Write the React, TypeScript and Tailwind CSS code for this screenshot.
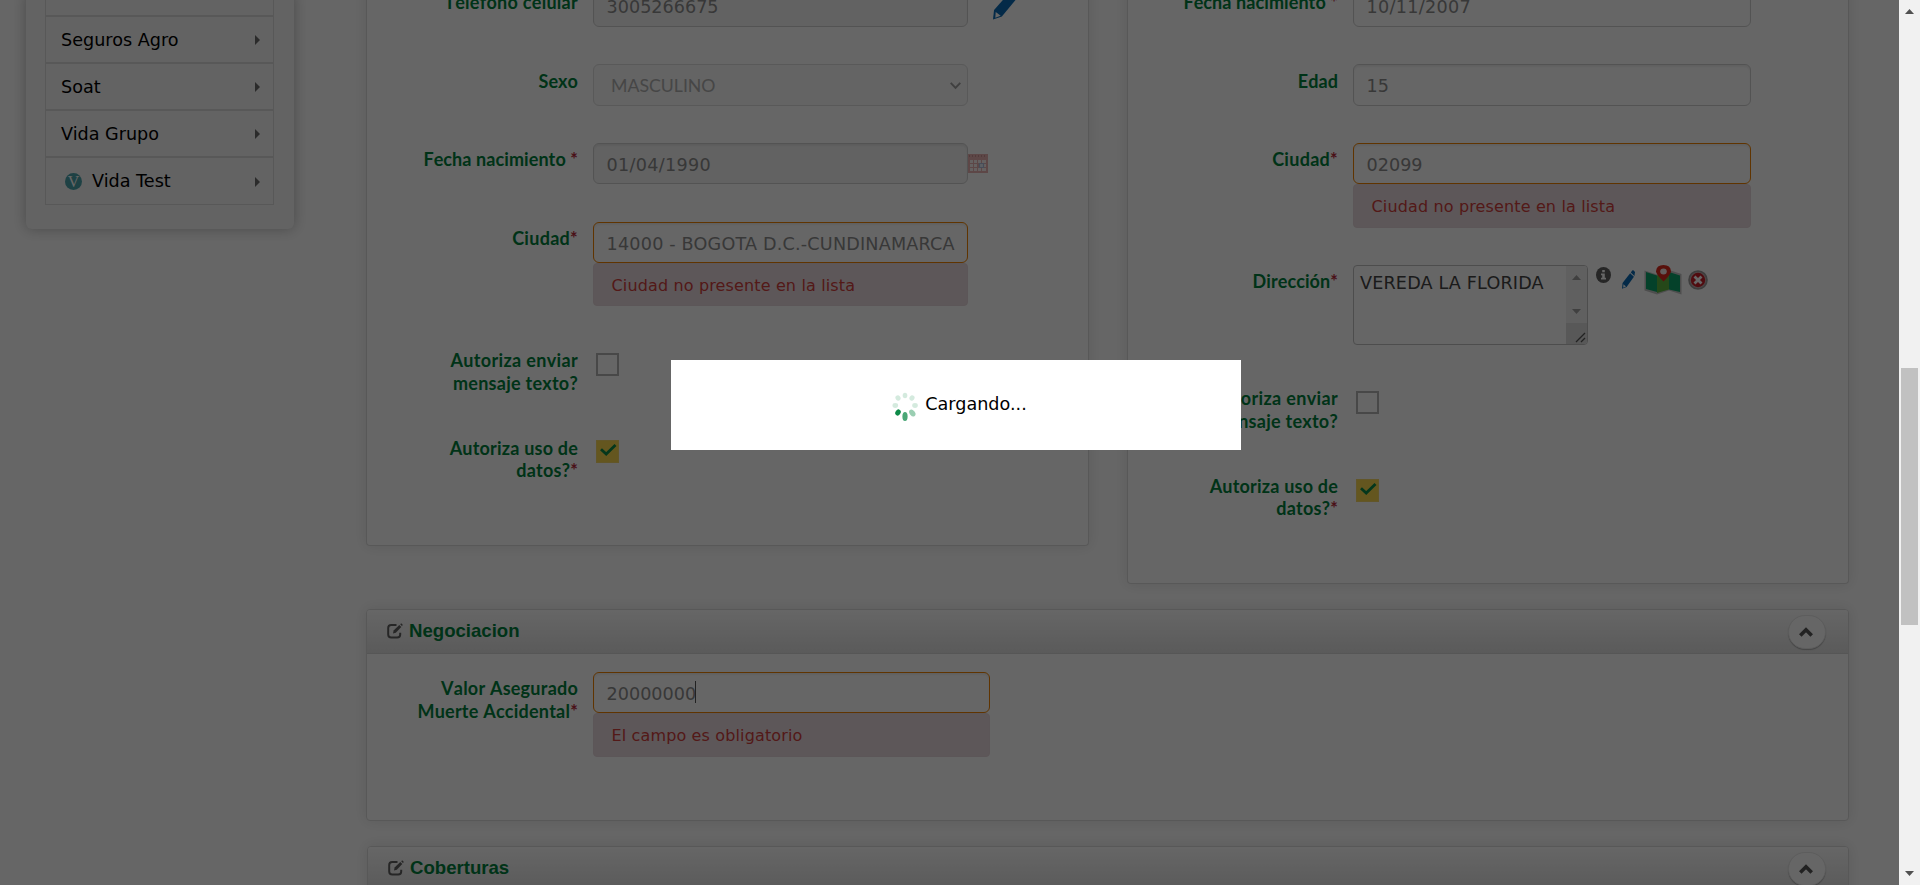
import type { ReactNode } from 'react';

const SANS = "font-['DejaVu_Sans',Verdana,sans-serif]";

function Label({ children, required, pad = 'pt-[5px]', w = 'w-[211px]', leading = 'leading-[23px]', spacing = 'tracking-[0.08px]' }: {
  children: ReactNode; required?: boolean; pad?: string; w?: string; leading?: string; spacing?: string;
}) {
  return (
    <div className={`shrink-0 whitespace-nowrap text-right font-['Lato',sans-serif] text-[18px] font-bold text-[#007f3c] [font-kerning:none] ${w} ${pad} ${leading} ${spacing}`}>
      {children}
      {required && <span className="text-[#b82a3c]">*</span>}
    </div>
  );
}

function Row({ h, children }: { h: string; children: ReactNode }) {
  return <div className={`flex items-start gap-[15px] ${h}`}>{children}</div>;
}

function Field({ value, w, h = 'h-[41px]', pad = 'pt-[3px]', tone = 'bg-white border-[#d0d0d0]', spacing = 'tracking-normal', caret }: {
  value: string; w: string; h?: string; pad?: string; tone?: string; spacing?: string; caret?: boolean;
}) {
  return (
    <div className={`flex items-center overflow-hidden whitespace-nowrap rounded-md border pl-[12.6px] text-[17.6px] text-[#8c8c8c] shadow-[inset_0_2px_2px_rgba(0,0,0,0.06)] ${SANS} ${w} ${h} ${pad} ${tone} ${spacing}`}>
      {value}
      {caret && <span className="-ml-px -mt-1 h-[22px] w-px bg-[#555]" />}
    </div>
  );
}

function ErrorNote({ children, h = 'h-[44px]', pad = 'pt-px' }: { children: ReactNode; h?: string; pad?: string }) {
  return (
    <div className={`flex items-center rounded border border-[#e6d6db] bg-[#e9dade] pl-[17.5px] text-[16px] tracking-[0.14px] text-[#cf3f3c] ${SANS} ${h} ${pad}`}>
      {children}
    </div>
  );
}

function Box({ checked, mt }: { checked?: boolean; mt: string }) {
  return checked ? (
    <div className={`ml-[3px] flex size-[23px] items-center justify-center border border-[#f5d668] bg-[#fbd64e] ${mt}`}>
      <svg className="-mt-0.5 ml-0.5" width="17" height="13" viewBox="0 0 17 13" fill="none" stroke="#0a8a48" strokeWidth="2.8">
        <path d="M1 5.2 6.2 10 15.5 1" />
      </svg>
    </div>
  ) : (
    <div className={`ml-[3px] size-[23px] border-2 border-[#b4b4b4] bg-white ${mt}`} />
  );
}

function Pencil({ w, h }: { w: number; h: number }) {
  return (
    <svg width={w} height={h} viewBox="0 0 24 32" preserveAspectRatio="none">
      <path d="M0 31.5 1 22 15 5.5l7 6L8.500 28.500Z" fill="#0a6ab4" />
      <path d="M16.300 4 18.800 1q1.300-1.300 2.800 0l2 2q1 1.200 0 2.600L23 10Z" fill="#0a6ab4" />
      <path d="m2.600 24 4.800 3.800-5.200 2Z" fill="#fff" />
    </svg>
  );
}

function CalendarIcon() {
  return (
    <svg className="mt-[11px]" width="20" height="19" viewBox="0 0 20 19" opacity="0.6">
      <path d="M0 0h20v19H0z" fill="#d98080" />
      <path d="M1 1h1v2H1zM4 1h1v2H4zM7 1h1v2H7zM10 1h1v2h-1zM13 1h1v2h-1zM16 1h1v2h-1z" fill="#a85050" />
      <path d="M2 6h3v3H2zM6 6h3v3H6zM10 6h3v3h-3zM14 6h4v3h-4zM2 10h3v3H2zM6 10h3v3H6zM16 10h2v3h-2zM2 14h3v3H2zM6 14h3v3H6zM10 14h3v3h-3zM14 14h4v3h-4z" fill="#fbeaea" />
      <path d="M11.500 9.500h4v4h-4z" fill="#dbe6f8" stroke="#7f96c4" strokeWidth="1.200" />
    </svg>
  );
}

function MapIcon() {
  return (
    <svg width="38" height="30" viewBox="0 0 38 30">
      <path d="m.5 5.500 12.500 4L25 5l12.500 4v20.500L25 25.500 13 29.500.5 25.500Z" fill="#c4c4c4" />
      <path d="m2 7 11 3.500V27L2 24Z" fill="#0aa36a" />
      <path d="M13 10.500 25 7v17.500L13 28Z" fill="#5cb440" />
      <path d="m25 7 11 3.500V27l-11-2.500Z" fill="#0aa36a" />
      <path d="M19.500 16.500Q12 9.500 12 6.300 12.500 0 19.500 0T27 6.300Q27 9.500 19.500 16.500Z" fill="#dc2a1c" />
      <ellipse cx="19.500" cy="6.500" rx="3.300" ry="3" fill="#f5e6e4" />
    </svg>
  );
}

function InfoIcon() {
  return (
    <svg width="15" height="16" viewBox="0 0 15 16">
      <ellipse cx="7.500" cy="8" rx="7.500" ry="8" fill="#5f5f5f" />
      <path d="M6.200 3h2.600v2.300H6.200zM5 6.500h3.800v4.300H10v1.700H5v-1.700h1.200V8.200H5z" fill="#fff" />
    </svg>
  );
}

function RemoveIcon() {
  return (
    <svg width="20" height="20" viewBox="0 0 20 20">
      <circle cx="10" cy="10" r="9.800" fill="#9c9c9c" />
      <circle cx="10" cy="10" r="8" fill="#c8b4b4" />
      <circle cx="10" cy="10" r="7.200" fill="#c81e28" />
      <path d="m6.500 6.500 7 7m0-7-7 7" stroke="#fff" strokeWidth="2.800" />
    </svg>
  );
}

function EditIcon() {
  return (
    <svg width="16" height="16" viewBox="0 0 16 16" fill="none">
      <path d="M9.500 1.900H4.200Q1.200 1.900 1.200 4.900V11.500Q1.200 14.500 4.200 14.500H10.200Q13.200 14.500 13.200 11.500V9.800" stroke="#606060" strokeWidth="2" />
      <path d="m6 10.500.6-3L12.300 2l2 2L8.800 9.700Z" fill="#606060" />
      <path d="m13.200 1.200 1-1 1.700 1.700-1 1Z" fill="#606060" />
    </svg>
  );
}

function PanelHead({ title }: { title: string }) {
  return (
    <div className="flex h-11 items-start justify-between border-b border-[#d8d8d8] bg-gradient-to-b from-white to-[#e2e2e2] pl-[20px] pr-[22px]">
      <div className="flex items-center gap-[6px] pt-[9px]">
        <EditIcon />
        <h3 className="font-['Liberation_Sans',Arial,sans-serif] text-[18.6px] font-bold leading-6 text-[#007f3c]">{title}</h3>
      </div>
      <div className="mt-[5px] flex h-[34px] w-[38px] items-center justify-center rounded-full border border-[#e8e8e8] bg-white shadow-[0_1px_1px_rgba(0,0,0,0.25)]">
        <svg className="-ml-0.5" width="14" height="10" viewBox="0 0 14 10" fill="none" stroke="#555" strokeWidth="3.600">
          <path d="M1.300 8.500 7 2.800l5.700 5.700" />
        </svg>
      </div>
    </div>
  );
}

function MenuItem({ label, h = 'h-[47px]', icon }: { label: string; h?: string; icon?: boolean }) {
  return (
    <div className={`flex items-center border border-[#dcdcdc] pl-[15px] pr-[13px] pt-px text-[17.6px] text-black ${h}`}>
      {icon && (
        <span className="ml-1 mr-2.5 flex size-[17px] items-center justify-center rounded-full bg-[#4ba3aa] font-['Liberation_Serif',serif] text-[16px] leading-none text-white">
          V
        </span>
      )}
      <span className="flex-1">{label}</span>
      <svg width="5" height="10" viewBox="0 0 5 10"><path d="M0 0l5 5-5 5z" fill="#6c6c6c" /></svg>
    </div>
  );
}

const PANEL = 'border border-[#dcdcdc] bg-white shadow-[0_0_14px_rgba(0,0,0,0.11)]';
const FAIL = 'bg-white border-[#f08200]';
const OFF = 'bg-[#f5f5f5] border-[#d0d0d0]';
const RIGHT = 'w-[210px]';

export default function App() {
  return (
    <div className={`relative flex h-[885px] w-[1920px] overflow-hidden bg-white ${SANS}`}>
      <div className="relative flex h-full w-[1899px] items-start overflow-hidden">
        <aside className="ml-[26px] -mt-2 h-[237px] w-[268px] shrink-0 rounded-md bg-[#f7f7f7] pl-[19px] pr-[20px] shadow-[0_0_14px_rgba(0,0,0,0.28)]">
          <div className="h-6 border border-[#dcdcdc]" />
          <MenuItem label="Seguros Agro" />
          <MenuItem label="Soat" />
          <MenuItem label="Vida Grupo" />
          <MenuItem label="Vida Test" h="h-[48px]" icon />
        </aside>

        <main className="-mt-3.5 ml-[72px] flex w-[1483px] shrink-0 flex-col">
          <div className="flex items-start gap-[38px]">
            <section className={`h-[560px] w-[723px] rounded-b border-t-0! ${PANEL}`}>
              <Row h="h-[78px]">
                <Label spacing="tracking-[0.28px]">Teléfono celular</Label>
                <Field value="3005266675" w="w-[375px]" pad="pt-px" tone={OFF} />
                <div className="ml-[10px] mt-0.5"><Pencil w={25} h={32} /></div>
              </Row>
              <Row h="h-[79px]">
                <Label pad="pt-[6px]">Sexo</Label>
                <div className="flex h-[42px] w-[375px] items-center justify-between rounded-md border border-[#dedede] bg-[#f9f9f9] pl-[17px] pr-1.5 pt-0.5 font-['Lato',sans-serif] text-[17.7px] text-[#b0b0b0]">
                  MASCULINO
                  <svg width="11" height="8" viewBox="0 0 11 8" fill="none" stroke="#a0a0a0" strokeWidth="2"><path d="m.7.900 4.800 5L10.300.900" /></svg>
                </div>
              </Row>
              <Row h="h-[79px]">
                <Label required>Fecha nacimiento </Label>
                <div className="flex">
                  <Field value="01/04/1990" w="w-[375px]" tone={OFF} spacing="tracking-[0.3px]" />
                  <CalendarIcon />
                </div>
              </Row>
              <Row h="h-[127px]">
                <Label spacing="tracking-[0.28px]" required>Ciudad</Label>
                <div>
                  <Field value="14000 - BOGOTA D.C.-CUNDINAMARCA" w="w-[375px]" tone={FAIL} spacing="tracking-[0.19px]" />
                  <ErrorNote h="h-[43px]" pad="pt-0.5">Ciudad no presente en la lista</ErrorNote>
                </div>
              </Row>
              <Row h="h-[88px]">
                <Label pad="pt-0" spacing="tracking-[0.25px]"><span className="tracking-[0.34px]">Autoriza enviar</span><br />mensaje texto?</Label>
                <Box mt="mt-[4px]" />
              </Row>
              <Row h="h-[88px]">
                <Label pad="pt-0" leading="leading-[22px]" spacing="tracking-[0.2px]" required>Autoriza uso de<br />datos?</Label>
                <Box checked mt="mt-[3px]" />
              </Row>
            </section>

            <section className={`h-[598px] w-[722px] rounded-b border-t-0! ${PANEL}`}>
              <Row h="h-[78px]">
                <Label w={RIGHT} required>Fecha nacimiento </Label>
                <Field value="10/11/2007" w="w-[398px]" pad="pt-px" spacing="tracking-[0.3px]" />
              </Row>
              <Row h="h-[79px]">
                <Label w={RIGHT} pad="pt-[6px]">Edad</Label>
                <Field value="15" w="w-[398px]" h="h-[42px]" />
              </Row>
              <Row h="h-[122px]">
                <Label w={RIGHT} spacing="tracking-[0.28px]" required>Ciudad</Label>
                <div>
                  <Field value="02099" w="w-[398px]" tone={FAIL} />
                  <ErrorNote>Ciudad no presente en la lista</ErrorNote>
                </div>
              </Row>
              <Row h="h-[122px]">
                <Label w={RIGHT} required>Dirección</Label>
                <div className="flex items-start">
                  <div className="flex h-[80px] w-[235px] overflow-hidden rounded border border-[#c0c0c0]">
                    <div className="flex-1 whitespace-nowrap pl-[6px] pt-[5px] text-[17.6px] leading-6 tracking-[0.16px] text-[#444]">VEREDA LA FLORIDA</div>
                    <div className="flex w-[21px] flex-col bg-[#f1f1f1]">
                      <div className="flex flex-1 flex-col items-center justify-between pb-[9px] pt-[9px]">
                        <svg width="9" height="5" viewBox="0 0 9 5"><path d="M0 5 4.500 0 9 5z" fill="#a0a0a0" /></svg>
                        <svg width="9" height="5" viewBox="0 0 9 5"><path d="M0 0 4.500 5 9 0z" fill="#a0a0a0" /></svg>
                      </div>
                      <div className="flex h-[21px] items-end justify-end bg-[#dcdcdc] p-px">
                        <svg width="11" height="11" viewBox="0 0 11 11" stroke="#555" strokeWidth="1.300"><path d="M1 10 10 1M6 10l4-4" /></svg>
                      </div>
                    </div>
                  </div>
                  <div className="ml-2 mt-0.5"><InfoIcon /></div>
                  <div className="ml-[11px] mt-[5px]"><Pencil w={13} h={19} /></div>
                  <div className="ml-[9px]"><MapIcon /></div>
                  <div className="ml-1.5 mt-[5px]"><RemoveIcon /></div>
                </div>
              </Row>
              <Row h="h-[88px]">
                <Label w={RIGHT} pad="pt-0" spacing="tracking-[0.25px]"><span className="tracking-[0.34px]">Autoriza enviar</span><br />mensaje texto?</Label>
                <Box mt="mt-[4px]" />
              </Row>
              <Row h="h-[88px]">
                <Label w={RIGHT} pad="pt-0" leading="leading-[22px]" spacing="tracking-[0.2px]" required>Autoriza uso de<br />datos?</Label>
                <Box checked mt="mt-[4px]" />
              </Row>
            </section>
          </div>

          <section className={`mt-[25px] h-[212px] overflow-clip rounded ${PANEL}`}>
            <PanelHead title="Negociacion" />
            <div className="flex gap-[15px] pt-[18px]">
              <Label spacing="tracking-[0.22px]" required>Valor Asegurado<br />Muerte Accidental</Label>
              <div>
                <Field value="20000000" w="w-[397px]" tone={FAIL} caret />
                <ErrorNote>El campo es obligatorio</ErrorNote>
              </div>
            </div>
          </section>

          <section className={`ml-px mt-[25px] h-[212px] overflow-clip rounded ${PANEL}`}>
            <PanelHead title="Coberturas" />
          </section>
        </main>
        <div className="absolute inset-0 bg-black/60" />
      </div>

      <div className="flex h-full w-[21px] flex-col items-center bg-[#f1f1f1] pb-[9px] pt-[9px]">
        <svg width="9" height="5" viewBox="0 0 9 5"><path d="M0 5 4.500 0 9 5z" fill="#505050" /></svg>
        <div className="mt-[354px] h-[257px] w-[17px] bg-[#c1c1c1]" />
        <svg className="mt-auto" width="9" height="5" viewBox="0 0 9 5"><path d="M0 0 4.500 5 9 0z" fill="#505050" /></svg>
      </div>

      <div className="absolute left-[671px] top-[360px] flex h-[90px] w-[570px] items-start justify-center gap-[7px] bg-white pl-[7px] pt-[32px] text-[17.6px] leading-6 text-black">
        <svg width="26" height="30" viewBox="0 0 26 30" fill="#0e8a48">
          <ellipse cx="13" cy="3.500" rx="2.300" ry="2.800" opacity=".18" />
          <ellipse cx="20" cy="6" rx="2.400" ry="2.800" opacity=".18" transform="rotate(35 20 6)" />
          <ellipse cx="23" cy="13.500" rx="2.800" ry="2.400" opacity=".18" />
          <ellipse cx="20.300" cy="21" rx="2.600" ry="3.800" opacity=".42" transform="rotate(-40 20.300 21)" />
          <ellipse cx="13" cy="24.500" rx="2.600" ry="4.500" opacity=".75" />
          <ellipse cx="6" cy="20.500" rx="2.500" ry="3.200" transform="rotate(35 6 20.500)" />
          <ellipse cx="3.300" cy="13.500" rx="2.800" ry="2.400" opacity=".18" />
          <ellipse cx="6" cy="6" rx="2.400" ry="2.800" opacity=".18" transform="rotate(-35 6 6)" />
        </svg>
        <span>Cargando...</span>
      </div>
    </div>
  );
}
